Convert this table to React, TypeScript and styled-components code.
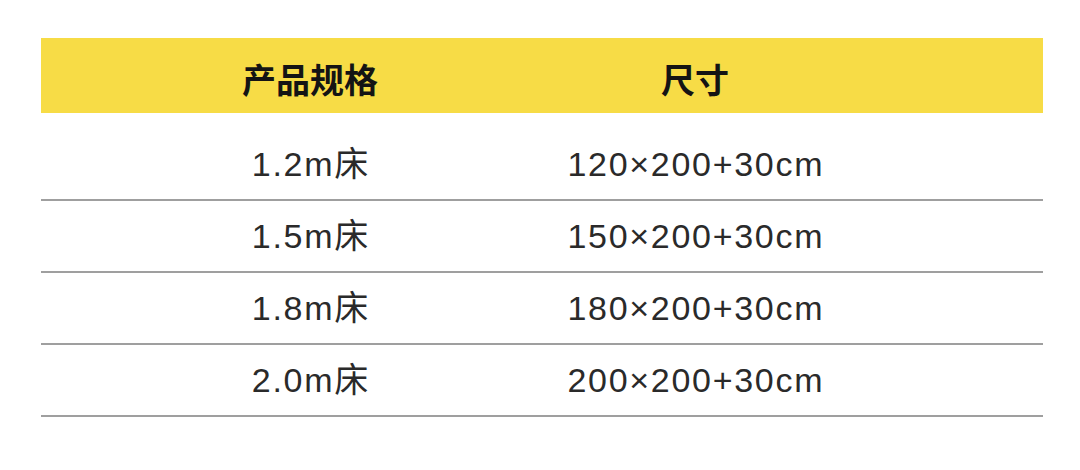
import React, {FC} from "react";
import styled, {createGlobalStyle} from "styled-components";

const GlobalStyle = createGlobalStyle`
  html, body {
    margin: 0;
    padding: 0;
    background: #ffffff;
  }
`;

const Page = styled.div`
  width: 1080px;
  height: 470px;
  padding: 38px 0 0 41px;
  box-sizing: border-box;
  font-family: "Liberation Sans", "Noto Sans CJK SC", sans-serif;
`;

const Table = styled.div`
  width: 1002px;
`;

const Row = styled.div<{ $header?: boolean }>`
  display: grid;
  grid-template-columns: 538px 232px;
  align-items: center;
  box-sizing: border-box;
  height: ${p => (p.$header ? "75px" : "72px")};
  padding-top: ${p => (p.$header ? "7px" : "0")};
  background: ${p => (p.$header ? "#f7dc46" : "transparent")};
  border-bottom: ${p => (p.$header ? "none" : "2px solid #9f9f9f")};
`;

const Body = styled.div`
  padding-top: 16px;
`;

const HeadCell = styled.div`
  display: flex;
  justify-content: center;
  font-family: "Noto Sans CJK SC", sans-serif;
  font-weight: 700;
  font-size: 34px;
  line-height: 1;
  color: #141414;
`;

const Cell = styled.div`
  display: flex;
  justify-content: center;
  font-size: 34px;
  letter-spacing: 1.7px;
  text-indent: 1.7px;
  line-height: 1;
  color: #2a2a2a;
  white-space: nowrap;
`;

const sizes = [
  {spec: "1.2m床", size: "120×200+30cm"},
  {spec: "1.5m床", size: "150×200+30cm"},
  {spec: "1.8m床", size: "180×200+30cm"},
  {spec: "2.0m床", size: "200×200+30cm"}
];

const App: FC = () => (
  <Page>
    <GlobalStyle/>
    <Table>
      <Row $header>
        <HeadCell>产品规格</HeadCell>
        <HeadCell>尺寸</HeadCell>
      </Row>
      <Body>
        {sizes.map(s => (
          <Row key={s.spec}>
            <Cell><span>{s.spec}</span></Cell>
            <Cell><span>{s.size}</span></Cell>
          </Row>
        ))}
      </Body>
    </Table>
  </Page>
);

export default App;
